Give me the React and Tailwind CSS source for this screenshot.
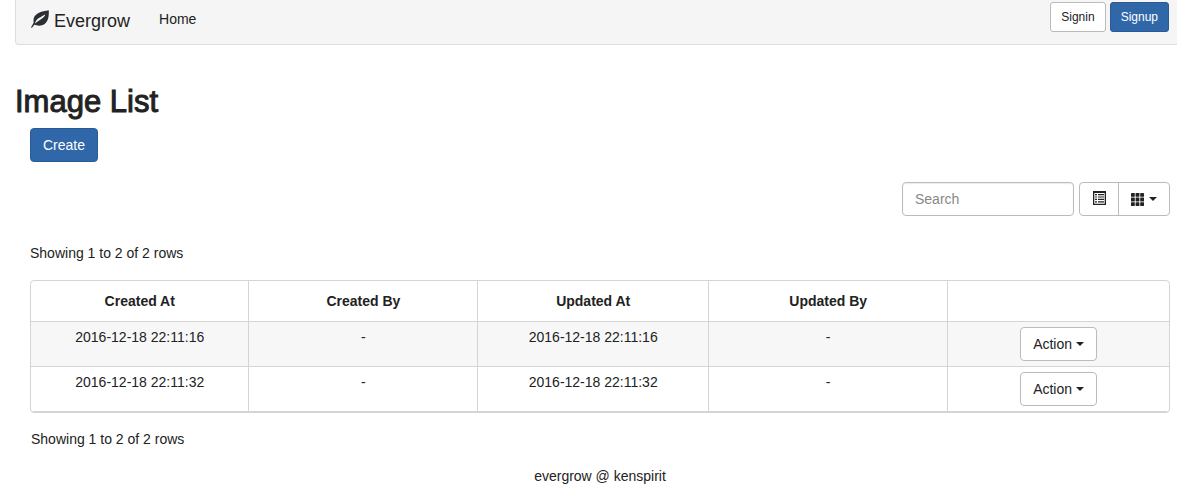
const rows = [
  { created: "2016-12-18 22:11:16", updated: "2016-12-18 22:11:16" },
  { created: "2016-12-18 22:11:32", updated: "2016-12-18 22:11:32" },
];

const columns = ["Created At", "Created By", "Updated At", "Updated By", ""];

function LeafIcon() {
  return (
    <svg viewBox="0 0 18 18" className="h-[18px] w-[18px] text-[#2b2e33]" aria-hidden="true">
      <path
        fill="currentColor"
        d="M17.8 0.3C14.5 1.3 10.5 1.3 7 3.2 3.3 5.2 1.900 8.600 2.700 12.600 2.200 14 1 15.500.2 16.900c-.3.6.5 1.100.9.600 1-1.200 1.600-1.900 2.400-2.700 3.800 1.500 8.900 1.100 11.600-2.300C17.800 9 17.900 5 17.800.3ZM14.400 4.300C13 8.400 8.500 9.800 4 13.500 5.200 8.300 9.800 7.400 14.400 4.300Z"
      />
    </svg>
  );
}

function ListIcon() {
  return (
    <svg viewBox="0 0 13 14" className="h-[14px] w-[13px]" aria-hidden="true">
      <path
        fill="currentColor"
        fillRule="evenodd"
        d="M0 0h13v14H0ZM1.3 2v10.7h10.4V2Z"
      />
      <path
        fill="currentColor"
        d="M2 3h2v1.2H2Zm3 0h6v1.2H5ZM2 5.4h2v1.2H2Zm3 0h6v1.2H5ZM2 7.8h2V9H2Zm3 0h6V9H5ZM2 10.2h2v1.2H2Zm3 0h6v1.2H5Z"
      />
    </svg>
  );
}

function GridIcon() {
  return (
    <svg viewBox="0 0 13 13" className="h-[13px] w-[13px]" aria-hidden="true">
      {[0, 4.6, 9.2].map((y) =>
        [0, 4.6, 9.2].map((x) => (
          <rect key={`${x}-${y}`} x={x} y={y} width="3.8" height="3.8" rx="0.4" fill="currentColor" />
        ))
      )}
    </svg>
  );
}

function Caret() {
  return (
    <svg viewBox="0 0 8 4" className="h-1 w-2" aria-hidden="true">
      <path fill="currentColor" d="M0 0h8L4 4Z" />
    </svg>
  );
}

export default function App() {
  return (
    <div className="bg-white pl-[15px] font-['Liberation_Sans',Arial,sans-serif] text-sm leading-5 text-[#222]">
      <nav className="flex h-[45px] items-start justify-between rounded-bl border-b border-l border-[#ddd] bg-[#f5f5f5] pr-2 pl-[15px]">
        <div className="flex">
          <a href="#" className="flex items-center gap-[5px] pt-[10px] text-lg leading-5">
            <span className="pb-[3px]">
              <LeafIcon />
            </span>
            <span>Evergrow</span>
          </a>
          <a href="#" className="pt-[9px] pl-[29px]">
            Home
          </a>
        </div>
        <div className="flex gap-1 pt-[2px] text-xs">
          <button type="button" className="h-[30px] rounded-[3px] border border-[#bbb] bg-white px-[10px]">
            Signin
          </button>
          <button type="button" className="h-[30px] rounded-[3px] border border-[#285a98] bg-[#3067a8] px-[10px] text-white">
            Signup
          </button>
        </div>
      </nav>

      <h2 className="pt-10 text-[31px] leading-[33px] [-webkit-text-stroke:1px_#222]">Image List</h2>

      <main className="pt-[10px] pr-[7px] pl-[15px]">
        <button type="button" className="h-[34px] rounded border border-[#285a98] bg-[#3067a8] px-3 text-white">
          Create
        </button>

        <div className="flex justify-end gap-[5px] pt-5">
          <input
            type="text"
            aria-label="Search"
            placeholder="Search"
            className="h-[34px] w-[172px] rounded border border-[#bbb] px-3 shadow-[inset_0_1px_1px_rgba(0,0,0,0.08)] placeholder:text-[#888]"
          />
          <div className="flex h-[34px] rounded border border-[#bbb]">
            <button type="button" aria-label="Toggle" className="flex items-center border-r border-[#bbb] pr-3 pb-[2px] pl-[13px]">
              <ListIcon />
            </button>
            <button type="button" aria-label="Columns" className="flex items-center gap-[5px] px-3">
              <GridIcon />
              <Caret />
            </button>
          </div>
        </div>

        <p className="pt-[27px]">Showing 1 to 2 of 2 rows</p>

        <div className="mt-[17px] overflow-hidden rounded border border-[#d4d4d4]">
          <table className="w-full table-fixed border-separate border-spacing-0 text-center">
            <colgroup>
              <col className="w-[19.2%]" />
              <col className="w-[20.1%]" />
              <col className="w-[20.3%]" />
              <col className="w-[21%]" />
              <col />
            </colgroup>
            <thead>
              <tr>
                {columns.map((name, i) => (
                  <th
                    key={i}
                    scope="col"
                    className="h-[41px] border-r border-b border-[#d4d4d4] p-0 font-bold last:border-r-0"
                  >
                    {name}
                  </th>
                ))}
              </tr>
            </thead>
            <tbody>
              {rows.map((row) => (
                <tr
                  key={row.created}
                  className="align-top odd:bg-[#f7f7f7] [&>td]:border-r [&>td]:border-b [&>td]:border-[#d4d4d4] [&>td]:py-[5px] [&>td:last-child]:border-r-0"
                >
                  <td>{row.created}</td>
                  <td>-</td>
                  <td>{row.updated}</td>
                  <td>-</td>
                  <td>
                    <div className="flex justify-center">
                      <button
                        type="button"
                        className="flex h-[34px] items-center gap-1 rounded border border-[#bbb] bg-white px-3"
                      >
                        Action
                        <Caret />
                      </button>
                    </div>
                  </td>
                </tr>
              ))}
            </tbody>
          </table>
        </div>

        <p className="pt-4 pl-px">Showing 1 to 2 of 2 rows</p>
      </main>

      <footer className="pt-[17px] pl-2 text-center">evergrow @ kenspirit</footer>
    </div>
  );
}
